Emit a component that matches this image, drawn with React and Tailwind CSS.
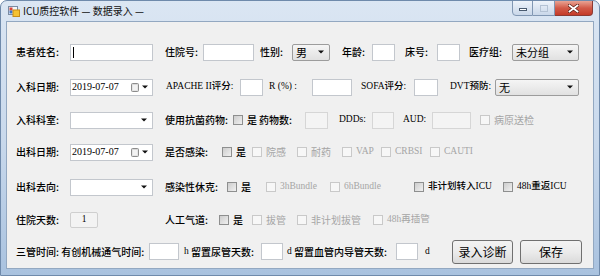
import React from 'react';

const C = "[font-family:'Noto_Sans_CJK_SC',sans-serif] text-[10px] leading-none whitespace-nowrap";
const S = "[font-family:'Liberation_Serif','Noto_Sans_CJK_SC',serif] text-[9.5px] leading-none whitespace-pre";

function L({ t, w = '', serif, dim, extra = '' }) {
  return (
    <span className={`block shrink-0 ${serif ? S : C} ${dim ? 'text-[#a5a5a5]' : 'text-black font-medium'} ${w} ${extra}`}>{t}</span>
  );
}

function Arrow() {
  return (
    <svg width="6" height="4" viewBox="0 0 6 4" className="shrink-0">
      <path d="M0 0.5H6L3 3.5Z" fill="#111" />
    </svg>
  );
}

function TB({ w, dis, children }) {
  return (
    <div className={`shrink-0 h-[17px] border ${dis ? 'bg-[#f4f4f4] border-[#d6d6d6]' : 'bg-white border-[#c3c7cd]'} ${w}`}>{children}</div>
  );
}

function Sel({ w, t }) {
  return (
    <div className={`shrink-0 h-[17px] flex items-center justify-between rounded-[2px] border border-[#9c9c9c] bg-gradient-to-b from-[#f5f5f5] to-[#e1e1e1] pl-[3px] pr-[5px] ${w}`}>
      <span className={`${C} text-[11px] text-black`}>{t}</span>
      <Arrow />
    </div>
  );
}

function Combo() {
  return (
    <div className="shrink-0 w-[83px] h-[17px] flex items-center justify-end bg-white border border-[#c3c7cd] pr-[5px]">
      <Arrow />
    </div>
  );
}

function Cal() {
  return (
    <svg width="8" height="9" viewBox="0 0 8 9" className="shrink-0">
      <rect x="0.5" y="0.5" width="7" height="8" rx="1" fill="#d9d9d9" stroke="#8c8c8c" />
      <rect x="1.5" y="2" width="5" height="5.5" fill="#f2f2f2" />
    </svg>
  );
}

function DP() {
  return (
    <div className="shrink-0 w-[83px] h-[17px] flex items-center bg-white border border-[#c3c7cd] pl-[1px] pr-[4px]">
      <span className="[font-family:'Liberation_Serif',serif] text-[10px] leading-none text-black">2019-07-07</span>
      <div className="ml-auto flex items-center gap-[3px]">
        <Cal />
        <Arrow />
      </div>
    </div>
  );
}

function CB({ dis }) {
  return (
    <span
      className={`block shrink-0 w-[10px] h-[10px] border ${dis ? 'border-[#c9c9c9] bg-[#f7f7f7]' : 'border-[#8e8f8f] bg-gradient-to-br from-[#cdcdcd] to-[#f0f0f0]'}`}
    />
  );
}

function CI({ t, w = '', dis, serif, extra = '' }) {
  return (
    <div className={`flex items-center shrink-0 ${w} ${extra}`}>
      <CB dis={dis} />
      <L t={t} serif={serif} dim={dis} extra="ml-[4px]" />
    </div>
  );
}

function Btn({ w, t, extra = '' }) {
  return (
    <div className={`shrink-0 h-[24px] flex items-center justify-center rounded-[3px] border border-[#707070] bg-gradient-to-b from-[#f3f3f3] via-[#ebebeb] to-[#dadada] ${w} ${extra}`}>
      <span className={`${C} text-[12px] text-black`}>{t}</span>
    </div>
  );
}

function AppIcon() {
  return (
    <svg width="12" height="12" viewBox="0 0 12 12" className="shrink-0">
      <rect x="0.5" y="1.5" width="9" height="8" fill="#f4f6f9" stroke="#7a8ca3" />
      <rect x="1.5" y="2.5" width="3" height="3" fill="#d9453a" />
      <rect x="1.5" y="5.5" width="3" height="3" fill="#3a73c9" />
      <rect x="5" y="5" width="6.5" height="6.5" fill="#f5c233" stroke="#c98d17" />
    </svg>
  );
}

export default function App() {
  return (
    <div className="w-[600px] h-[276px] flex flex-col border border-[#6f8aab] rounded-t-[7px] bg-gradient-to-b from-[#dbe6f3] via-[#c9d9ec] to-[#a9c2df] overflow-hidden">
      <div className="h-[20px] shrink-0 flex items-start">
        <div className="flex items-center h-[20px] pl-[7px]">
          <AppIcon />
          <span className="ml-[3px] [font-family:'Noto_Sans_CJK_SC',sans-serif] text-[10px] leading-none whitespace-pre text-[#111]">ICU质控软件 — 数据录入 —</span>
        </div>
        <div className="ml-auto flex pr-[6px] -mt-px">
          <div className="w-[21px] h-[16px] flex items-end justify-center pb-[4px] rounded-bl-[4px] border border-[#8197b3] bg-gradient-to-b from-[#eef3fa] to-[#c9d7e9]">
            <span className="block w-[8px] h-[3px] bg-white border border-[#4a5b70]" />
          </div>
          <div className="w-[22px] h-[16px] flex items-center justify-center border-y border-r border-[#8197b3] bg-gradient-to-b from-[#eef3fa] to-[#c9d7e9]">
            <span className="block w-[8px] h-[7px] border border-[#b4c2d4] bg-transparent" />
          </div>
          <div className="w-[38px] h-[16px] flex items-center justify-center rounded-br-[4px] border-y border-r border-[#8c3a33] bg-gradient-to-b from-[#e8a394] via-[#d25a48] to-[#c43a28]">
            <svg width="11" height="9" viewBox="0 0 11 9">
              <path d="M1.5 1.5L9.5 7.5M9.5 1.5L1.5 7.5" stroke="#5a1d16" strokeWidth="3.2" strokeLinecap="square" />
              <path d="M1.5 1.5L9.5 7.5M9.5 1.5L1.5 7.5" stroke="#ffffff" strokeWidth="1.8" strokeLinecap="square" />
            </svg>
          </div>
        </div>
      </div>

      <div className="mx-[5px] h-[248px] shrink-0 border border-[#93a8c1] bg-[#f0f0f0] flex flex-col pt-[13px] overflow-hidden">
        {/* row 1 */}
        <div className="flex items-center pl-[9px] h-[34px] shrink-0">
          <L t="患者姓名:" w="w-[54px]" />
          <TB w="w-[83px]"><span className="block ml-[2px] mt-[2px] w-px h-[11px] bg-black" /></TB>
          <L t="住院号:" w="w-[38px]" extra="ml-[12px]" />
          <TB w="w-[51px]" />
          <L t="性别:" w="w-[32px]" extra="ml-[6px]" />
          <Sel w="w-[38px]" t="男" />
          <L t="年龄:" w="w-[30px]" extra="ml-[12px]" />
          <TB w="w-[23px]" />
          <L t="床号:" w="w-[32px]" extra="ml-[10px]" />
          <TB w="w-[23px]" />
          <L t="医疗组:" w="w-[43px]" extra="ml-[9px]" />
          <Sel w="w-[67px]" t="未分组" />
        </div>
        {/* row 2 */}
        <div className="flex items-center pl-[9px] h-[36px] shrink-0">
          <L t="入科日期:" w="w-[54px]" />
          <DP />
          <L t="APACHE II评分:" serif w="w-[74px]" extra="ml-[13px]" />
          <TB w="w-[23px]" />
          <L t="R (%) :" serif w="w-[43px]" extra="ml-[6px]" />
          <TB w="w-[40px]" />
          <L t="SOFA评分:" serif w="w-[53px]" extra="ml-[9px]" />
          <TB w="w-[24px]" />
          <L t="DVT预防:" serif w="w-[45px]" extra="ml-[12px]" />
          <Sel w="w-[84px]" t="无" />
        </div>
        {/* row 3 */}
        <div className="flex items-center pl-[9px] h-[30px] shrink-0">
          <L t="入科科室:" w="w-[54px]" />
          <Combo />
          <L t="使用抗菌药物:" w="w-[68px]" extra="ml-[12px]" />
          <CI t="是" w="w-[26px]" />
          <L t="药物数:" w="w-[46px]" />
          <TB dis w="w-[23px]" />
          <L t="DDDs:" serif w="w-[33px]" extra="ml-[11px]" />
          <TB dis w="w-[22px]" />
          <L t="AUD:" serif w="w-[29px]" extra="ml-[9px]" />
          <TB dis w="w-[39px]" />
          <CI t="病原送检" dis extra="ml-[9px]" />
        </div>
        {/* row 4 */}
        <div className="flex items-center pl-[9px] h-[34px] shrink-0">
          <L t="出科日期:" w="w-[54px]" />
          <DP />
          <L t="是否感染:" w="w-[57px]" extra="ml-[12px]" />
          <CI t="是" w="w-[30px]" />
          <CI t="院感" dis w="w-[45px]" />
          <CI t="耐药" dis w="w-[45px]" />
          <CI t="VAP" dis serif w="w-[39px]" />
          <CI t="CRBSI" dis serif w="w-[49px]" />
          <CI t="CAUTI" dis serif />
        </div>
        {/* row 5 */}
        <div className="flex items-center pl-[9px] h-[36px] shrink-0">
          <L t="出科去向:" w="w-[54px]" />
          <Combo />
          <L t="感染性休克:" w="w-[62px]" extra="ml-[12px]" />
          <CI t="是" w="w-[39px]" />
          <CI t="3hBundle" dis serif w="w-[64px]" />
          <CI t="6hBundle" dis serif w="w-[84px]" />
          <CI t="非计划转入ICU" serif w="w-[89px]" />
          <CI t="48h重返ICU" serif />
        </div>
        {/* row 6 */}
        <div className="flex items-center pl-[9px] h-[30px] shrink-0">
          <L t="住院天数:" w="w-[54px]" />
          <div className="shrink-0 w-[28px] h-[16px] flex items-center justify-center rounded-[2px] border border-[#cfcfcf] bg-[#f3f3f3]">
            <span className={`${S} text-black`}>1</span>
          </div>
          <L t="人工气道:" w="w-[54px]" extra="ml-[67px]" />
          <CI t="是" w="w-[33px]" />
          <CI t="拔管" dis w="w-[45px]" />
          <CI t="非计划拔管" dis w="w-[76px]" />
          <CI t="48h再插管" dis serif />
        </div>
        {/* row 7 */}
        <div className="flex items-center pl-[9px] h-[33px] shrink-0">
          <L t="三管时间: 有创机械通气时间:" w="w-[133px]" />
          <TB w="w-[30px]" />
          <L t="h" serif w="w-[7px]" extra="ml-[5px]" />
          <L t="留置尿管天数:" w="w-[70px]" />
          <TB w="w-[22px]" />
          <L t="d" serif w="w-[7px]" extra="ml-[4px]" />
          <L t="留置血管内导管天数:" w="w-[102px]" />
          <TB w="w-[22px]" />
          <L t="d" serif w="w-[27px]" extra="ml-[7px]" />
          <Btn w="w-[61px]" t="录入诊断" />
          <Btn w="w-[62px]" t="保存" extra="ml-[7px]" />
        </div>
      </div>
    </div>
  );
}
